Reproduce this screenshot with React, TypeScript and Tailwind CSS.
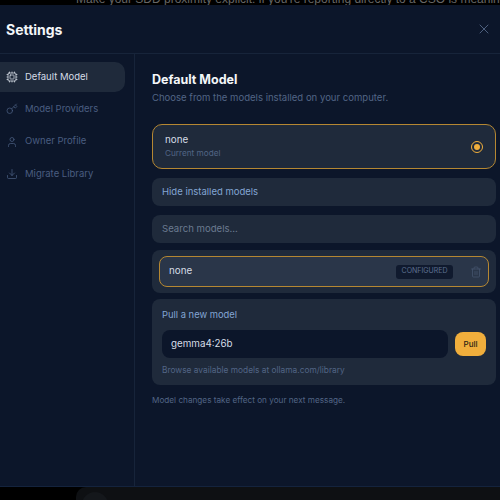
import { Cpu, Key, User, Download, X, Trash2 } from "lucide-react";

const navItems = [
  { label: "Default Model", icon: Cpu, active: true },
  { label: "Model Providers", icon: Key, active: false },
  { label: "Owner Profile", icon: User, active: false },
  { label: "Migrate Library", icon: Download, active: false },
];

export default function App() {
  return (
    <div className="w-[500px] h-[500px] overflow-hidden flex flex-col bg-black font-['Inter',sans-serif]">
      {/* page text behind the dialog */}
      <div className="h-[5px] bg-black overflow-hidden shrink-0">
        <p className="text-[12px] leading-[5px] -mt-[3px] pl-[76px] whitespace-nowrap text-[#666] font-['Liberation_Sans',sans-serif]">
          Make your SDD proximity explicit: if you're reporting directly to a CSO is meaningful
        </p>
      </div>

      <div className="h-[482px] shrink-0 flex flex-col bg-[#0c162a] border-b border-[#14233d]">
        <header className="h-[49px] shrink-0 flex items-center justify-between pl-[6px] pr-[8px] border-b border-[#17243a]">
          <h1 className="text-[14px] font-bold text-[#f4f6f9]">Settings</h1>
          <X size={16} strokeWidth={1.5} className="text-[#4d5f7d]" />
        </header>

        <div className="flex-1 flex min-h-0">
          <aside className="w-[135px] shrink-0 border-r border-[#17243a] pt-[8px] pr-[9px] flex flex-col gap-[2.3px]">
            {navItems.map((item) => (
              <div
                key={item.label}
                className={`h-[30px] flex items-center gap-[7px] pl-[6px] rounded-r-[10px] text-[9.5px] ${
                  item.active ? "bg-[#1f2a3b] text-[#d5dce6]" : "text-[#4a5d80]"
                }`}
              >
                <item.icon size={12} strokeWidth={1.5} className="shrink-0" />
                <span>{item.label}</span>
              </div>
            ))}
          </aside>

          <main className="flex-1 min-w-0 pl-[17px] pr-[4px] pt-[17px]">
            <h2 className="text-[12.5px] leading-[18px] font-bold text-[#f4f6f9]">Default Model</h2>
            <p className="mt-[1px] text-[9.55px] leading-[16px] text-[#526585]">
              Choose from the models installed on your computer.
            </p>

            <div className="mt-[18px] h-[45px] flex items-center justify-between pl-[12px] pr-[12px] rounded-[10px] border border-[#b58732] bg-[#1f2a3b]">
              <div>
                <div className="text-[9.8px] leading-[14px] text-[#d5dce6]">none</div>
                <div className="text-[8.2px] leading-[13px] text-[#526585]">Current model</div>
              </div>
              <div className="w-[12px] h-[12px] rounded-full border-[1.5px] border-[#f0ae3c] flex items-center justify-center">
                <div className="w-[6px] h-[6px] rounded-full bg-[#f0ae3c]" />
              </div>
            </div>

            <div className="mt-[9px] h-[28px] flex items-center pl-[10px] rounded-[8px] bg-[#1f2a3b] text-[9.5px] text-[#83a5d3]">
              Hide installed models
            </div>

            <div className="mt-[9px] h-[28px] flex items-center pl-[10px] rounded-[8px] bg-[#1f2a3b] text-[9.6px] text-[#6b7a90]">
              Search models...
            </div>

            <div className="mt-[7px] py-[6px] px-[7px] rounded-[8px] bg-[#1f2a3b]">
              <div className="h-[31px] flex items-center justify-between pl-[9px] pr-[6px] rounded-[8px] border border-[#b58732] bg-[#2a3649]">
                <span className="text-[9.8px] text-[#d5dce6]">none</span>
                <div className="flex items-center gap-[17px]">
                  <span className="w-[57px] h-[14px] flex items-center justify-center rounded-[3px] bg-[#101a2e] text-[7px] text-[#5e7090]">CONFIGURED</span>
                  <Trash2 size={12} strokeWidth={1.5} className="text-[#46556f]" />
                </div>
              </div>
            </div>

            <section className="mt-[6px] h-[86px] px-[10px] pt-[9px] rounded-[8px] bg-[#1f2a3b]">
              <div className="text-[9.4px] leading-[14px] text-[#83a5d3]">Pull a new model</div>
              <div className="mt-[8px] flex items-center gap-[7px]">
                <div className="flex-1 h-[28px] flex items-center pl-[9px] rounded-[8px] bg-[#0c162a] text-[9.8px] text-[#d5dce6]">
                  gemma4:26b
                </div>
                <button className="w-[31px] h-[24px] rounded-[8px] bg-[#f0ae3c] text-[8px] font-medium text-[#2a2314]">Pull</button>
              </div>
              <p className="mt-[6px] text-[8.35px] leading-[13px] text-[#526585]">
                Browse available models at ollama.com/library
              </p>
            </section>

            <p className="mt-[9px] text-[8.2px] leading-[13px] text-[#526585]">
              Model changes take effect on your next message.
            </p>
          </main>
        </div>
      </div>

      {/* page behind, bottom edge */}
      <div className="flex-1 flex">
        <div className="w-[76px] bg-black" />
        <div className="flex-1 bg-[#0e1013] pl-[6px] pt-[5px] rounded-tl-[10px]">
          <div className="w-[26px] h-[26px] rounded-full bg-[#14171b]" />
        </div>
      </div>
    </div>
  );
}
